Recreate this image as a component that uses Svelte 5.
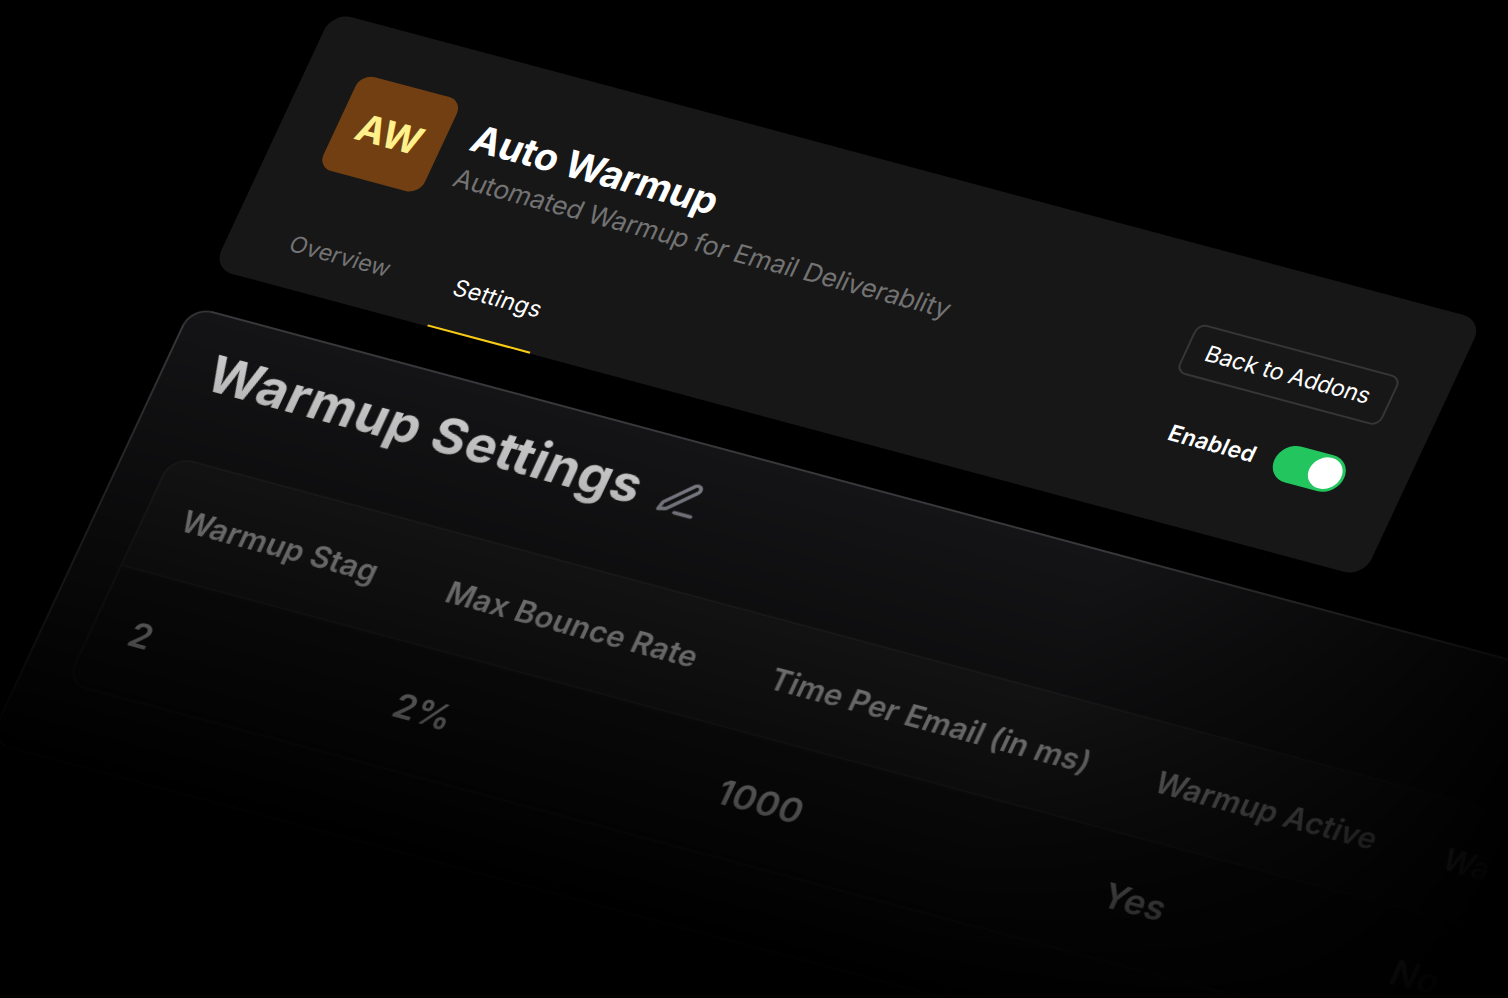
<script>
	const tabs = [
		{ label: 'Overview', active: false },
		{ label: 'Settings', active: true }
	];

	const columns = [
		{ title: 'Warmup Stag', value: '2', width: 274 },
		{ title: 'Max Bounce Rate', value: '2%', width: 335 },
		{ title: 'Time Per Email (in ms)', value: '1000', width: 399 },
		{ title: 'Warmup Active', value: 'Yes', width: 298 },
		{ title: 'Wa', value: 'No', width: 300 }
	];

	let enabled = $state(true);
</script>

<main class="viewport">
	<div class="scene">
		<header class="addon">
			<div class="addon-main">
				<div class="identity">
					<div class="badge">AW</div>
					<div class="identity-text">
						<h1 class="name">Auto Warmup</h1>
						<p class="tagline">Automated Warmup for Email Deliverablity</p>
					</div>
				</div>
				<nav class="tabs">
					{#each tabs as tab}
						<a class="tab" class:active={tab.active} href="#{tab.label.toLowerCase()}">{tab.label}</a>
					{/each}
				</nav>
			</div>
			<div class="addon-side">
				<button class="back">Back to Addons</button>
				<div class="status">
					<span class="status-label">Enabled</span>
					<button
						class="toggle"
						class:on={enabled}
						role="switch"
						aria-checked={enabled}
						aria-label="Enabled"
						onclick={() => (enabled = !enabled)}
					>
						<span class="knob"></span>
					</button>
				</div>
			</div>
		</header>

		<section class="panel">
			<div class="panel-head">
				<h2 class="panel-title">Warmup Settings</h2>
				<svg class="pen" viewBox="0 0 24 24" aria-hidden="true">
					<path d="M12 20h9" />
					<path d="M16.5 3.5a2.12 2.12 0 0 1 3 3L7 19l-4 1 1-4Z" />
				</svg>
			</div>
			<div class="table">
				<div class="row head">
					{#each columns as col}
						<div class="cell" style="width: {col.width}px">{col.title}</div>
					{/each}
				</div>
				<div class="row">
					{#each columns as col}
						<div class="cell" style="width: {col.width}px">{col.value}</div>
					{/each}
				</div>
			</div>
		</section>
	</div>
</main>

<style>
	:global(body) { margin: 0; background: #000; }

	.viewport {
		width: 100vw;
		height: 100vh;
		overflow: hidden;
		background: #000;
		color: #fff;
		font-family: Inter, 'Liberation Sans', sans-serif;
	}

	.viewport *, .viewport { box-sizing: border-box; }

	.scene {
		width: 1432px;
		transform-origin: 0 0;
		transform: translate(332.5px, 12px) rotate(15deg) skewX(-10deg);
	}

	/* header card */
	.addon {
		display: flex;
		justify-content: space-between;
		width: 1190.5px;
		height: 279px;
		padding: 0 50px 0 53px;
		border-radius: 20px;
		background: #171717;
	}

	.addon-main {
		display: flex;
		flex-direction: column;
		justify-content: space-between;
		padding-top: 52px;
	}

	.identity { display: flex; gap: 26px; }

	.badge {
		display: flex;
		align-items: center;
		justify-content: center;
		width: 104.5px;
		height: 102px;
		border-radius: 14px;
		background: #713f12;
		color: #fef08a;
		font-size: 38px;
		font-weight: 700;
	}

	.identity-text { padding-top: 9px; white-space: nowrap; }

	.name {
		margin: 0;
		font-size: 38px;
		font-weight: 700;
		letter-spacing: -0.3px;
		line-height: 46px;
	}

	.tagline {
		margin: 0;
		color: #737373;
		font-size: 26px;
		font-weight: 400;
		letter-spacing: -0.15px;
		line-height: 42px;
	}

	.tabs { display: flex; gap: 51.5px; }

	.tab {
		padding: 0 7.5px 27px;
		border-bottom: 2px solid transparent;
		color: #737373;
		font-size: 23px;
		line-height: 32px;
		text-decoration: none;
	}

	.tab.active { border-color: #facc15; color: #fff; letter-spacing: 0.3px; }

	.addon-side {
		display: flex;
		flex-direction: column;
		align-items: flex-end;
		padding-top: 75.5px;
	}

	.back {
		width: 211px;
		height: 54px;
		padding: 0;
		border: 2px solid #363636;
		border-radius: 10px;
		background: transparent;
		color: #fff;
		font: 400 23px Inter, 'Liberation Sans', sans-serif;
		letter-spacing: -0.15px;
		white-space: nowrap;
	}

	.status {
		display: flex;
		align-items: center;
		gap: 19px;
		margin-top: 39.5px;
		padding-right: 10px;
	}

	.status-label {
		font-size: 22.5px;
		font-weight: 600;
		letter-spacing: 0.2px;
		line-height: 30px;
	}

	.toggle {
		display: flex;
		align-items: center;
		width: 72px;
		height: 39px;
		padding: 0 3px;
		border: 0;
		border-radius: 20px;
		background: #404040;
	}

	.toggle.on { justify-content: flex-end; background: #22c55e; }

	.knob {
		width: 33px;
		height: 33px;
		border-radius: 50%;
		background: #fff;
	}

	/* settings panel, fading out to the bottom and to the right */
	.panel {
		width: 1450px;
		height: 474px;
		margin: 41px 0 0 -4px;
		padding: 26px 0 0 43.5px;
		overflow: hidden;
		border: 2px solid #3a3a3c;
		border-radius: 22px;
		background: #141416;
		mask-image: linear-gradient(to bottom, #000, transparent), linear-gradient(to right, #000 66%, transparent);
		mask-composite: intersect;
	}

	.panel-head {
		display: flex;
		align-items: center;
		gap: 18px;
		height: 64px;
		margin-bottom: 57.5px;
	}

	.panel-title {
		margin: 0;
		color: #dcdcdc;
		font-size: 52px;
		font-weight: 700;
		letter-spacing: 0.65px;
		line-height: 64px;
		white-space: nowrap;
	}

	.pen {
		width: 44.6px;
		height: 44.6px;
		fill: none;
		stroke: #85858f;
		stroke-width: 2;
		stroke-linecap: round;
		stroke-linejoin: round;
	}

	.table {
		width: 1700px;
		overflow: hidden;
		border: 2px solid #252528;
		border-radius: 22px;
	}

	.row {
		display: flex;
		align-items: center;
		height: 126px;
		font-size: 35.5px;
		font-weight: 600;
		letter-spacing: 0.4px;
	}

	.row.head {
		height: 118px;
		border-bottom: 2px solid #252528;
		background: #1b1b1b;
		color: #bababc;
		font-size: 30.5px;
		letter-spacing: 0.15px;
	}

	.cell {
		flex: none;
		padding-left: 37px;
		white-space: nowrap;
	}
</style>
